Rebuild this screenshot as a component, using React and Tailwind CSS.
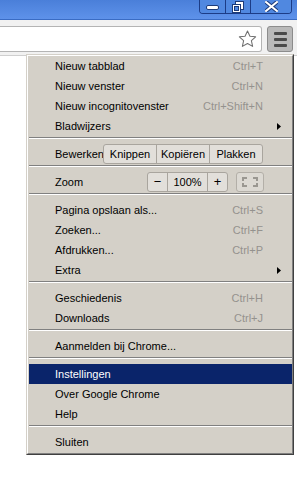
import React from 'react';

const menu = [
  { label: 'Nieuw tabblad', key: 'Ctrl+T' },
  { label: 'Nieuw venster', key: 'Ctrl+N' },
  { label: 'Nieuw incognitovenster', key: 'Ctrl+Shift+N' },
  { label: 'Bladwijzers', sub: true },
  { sep: true },
  { edit: true },
  { sep: true },
  { zoom: true },
  { sep: true },
  { label: 'Pagina opslaan als...', key: 'Ctrl+S' },
  { label: 'Zoeken...', key: 'Ctrl+F' },
  { label: 'Afdrukken...', key: 'Ctrl+P' },
  { label: 'Extra', sub: true },
  { sep: true },
  { label: 'Geschiedenis', key: 'Ctrl+H' },
  { label: 'Downloads', key: 'Ctrl+J' },
  { sep: true },
  { label: 'Aanmelden bij Chrome...' },
  { sep: true },
  { label: 'Instellingen', active: true },
  { label: 'Over Google Chrome' },
  { label: 'Help' },
  { sep: true },
  { label: 'Sluiten' },
];

function WinButtons() {
  return (
    <div className="flex h-[14px] ml-auto mr-[5px] border border-t-0 border-[#1c3c86] rounded-b-[4px] overflow-hidden">
      <div className="w-[26px] h-full flex items-center justify-center border-r border-[#1c3c86] bg-[#5088e0]">
        <svg width="13" height="6" viewBox="0 0 13 6">
          <rect x="0.5" y="1.5" width="12" height="4" rx="1.5" fill="#fff" stroke="#1d3b78" />
        </svg>
      </div>
      <div className="w-[25px] h-full flex items-center justify-center border-r border-[#1c3c86] bg-[#5088e0]">
        <svg width="12" height="12" viewBox="0 0 12 12">
          <rect x="3.5" y="0.5" width="8" height="8" fill="#fff" stroke="#1d3b78" />
          <rect x="0.5" y="3.5" width="8" height="8" fill="#fff" stroke="#1d3b78" />
          <rect x="2.5" y="5.5" width="4" height="4" fill="#5088e0" stroke="#1d3b78" />
        </svg>
      </div>
      <div className="w-[40px] h-full flex items-center justify-center bg-[#5088e0]">
        <svg width="13" height="11" viewBox="0 0 13 11">
          <path d="M1 1 L12 10 M12 1 L1 10" stroke="#1d3b78" strokeWidth="4" strokeLinecap="square" />
          <path d="M1 1 L12 10 M12 1 L1 10" stroke="#fff" strokeWidth="2" strokeLinecap="square" />
        </svg>
      </div>
    </div>
  );
}

function Row({ item }) {
  if (item.sep) {
    return (
      <div className="h-[8px] pt-[1px]">
        <div className="h-[1px] bg-[#808080]" />
        <div className="h-[1px] bg-white" />
      </div>
    );
  }
  if (item.edit) {
    return (
      <div className="h-[20px] flex items-center pl-[26px]">
        <span className="w-[48px]">Bewerken</span>
        <div className="flex h-[20px] border border-[#a9a59e] rounded-[3px] bg-[#e2dfda]">
          <span className="w-[53px] flex items-center justify-center border-r border-[#a9a59e]">Knippen</span>
          <span className="w-[53px] flex items-center justify-center border-r border-[#a9a59e]">Kopiëren</span>
          <span className="w-[52px] flex items-center justify-center">Plakken</span>
        </div>
      </div>
    );
  }
  if (item.zoom) {
    return (
      <div className="h-[20px] flex items-center pl-[26px]">
        <span className="w-[92px]">Zoom</span>
        <div className="flex h-[20px] border border-[#a9a59e] rounded-[3px] bg-[#e2dfda]">
          <span className="w-[20px] flex items-center justify-center border-r border-[#a9a59e] text-[13px]">−</span>
          <span className="w-[40px] flex items-center justify-center border-r border-[#a9a59e]">100%</span>
          <span className="w-[19px] flex items-center justify-center text-[13px]">+</span>
        </div>
        <div className="ml-[8px] w-[28px] h-[20px] border border-[#b3afa8] rounded-[3px] bg-[#dcd9d3] flex items-center justify-center">
          <svg width="16" height="10" viewBox="0 0 16 10" fill="none" stroke="#9a9791" strokeWidth="2">
            <path d="M1 4 V1 H5 M11 1 H15 V4 M15 6 V9 H11 M5 9 H1 V6" />
          </svg>
        </div>
      </div>
    );
  }
  return (
    <div
      className={`h-[20px] flex items-center pl-[26px] pr-[29px] ${item.active ? 'bg-[#0a246a] text-white' : ''}`}
    >
      <span className="flex-1">{item.label}</span>
      {item.key && <span className="text-[#94928e]">{item.key}</span>}
      {item.sub && (
        <svg width="4" height="7" viewBox="0 0 4 7" className="mr-[-18px]">
          <path d="M0 0 L4 3.5 L0 7 Z" fill="#000" />
        </svg>
      )}
    </div>
  );
}

export default function App() {
  return (
    <div className="relative w-[297px] h-[484px] bg-white overflow-hidden text-[11px] text-black" style={{ fontFamily: '"Liberation Sans", Arial, sans-serif' }}>
      {/* title bar */}
      <div className="h-[20px] flex items-start bg-gradient-to-b from-[#4a7fd9] to-[#5e92ea] border-b border-[#3a6cc4]">
        <WinButtons />
      </div>

      {/* toolbar */}
      <div className="h-[36px] bg-[#f1f1f1] border-b border-[#cfcfcf] flex items-start pt-[6px]">
        <div className="flex-1 h-[26px] bg-white border border-l-0 border-[#b4b4b4] rounded-r-[3px] flex items-center justify-end pr-[4px]">
          <svg width="19" height="18" viewBox="0 0 20 19">
            <path d="M10 1 L12.6 6.6 L18.6 7.2 L14.1 11.2 L15.4 17.3 L10 14.2 L4.6 17.3 L5.9 11.2 L1.4 7.2 L7.4 6.6 Z" fill="#fff" stroke="#6f6f6f" strokeWidth="1.1" strokeLinejoin="round" />
          </svg>
        </div>
        <div className="ml-[5px] mr-[4px] w-[26px] h-[26px] bg-[#b9b9b9] border border-[#8c8c8c] rounded-[3px] flex flex-col items-center justify-center gap-[3px]">
          <div className="w-[13px] h-[3px] bg-[#4a4a4a] rounded-[1px]" />
          <div className="w-[13px] h-[3px] bg-[#4a4a4a] rounded-[1px]" />
          <div className="w-[13px] h-[3px] bg-[#4a4a4a] rounded-[1px]" />
        </div>
      </div>

      {/* menu */}
      <div className="absolute left-[26px] top-[54px] w-[268px] border border-t-[#d4d0c8] border-l-[#d4d0c8] border-r-[#404040] border-b-[#404040]">
        <div className="bg-[#d4d0c8] border border-t-white border-l-white border-r-[#808080] border-b-[#808080] pl-[1px] pb-[1px]">
          {menu.map((item, i) => (
            <Row key={i} item={item} />
          ))}
        </div>
      </div>
    </div>
  );
}
